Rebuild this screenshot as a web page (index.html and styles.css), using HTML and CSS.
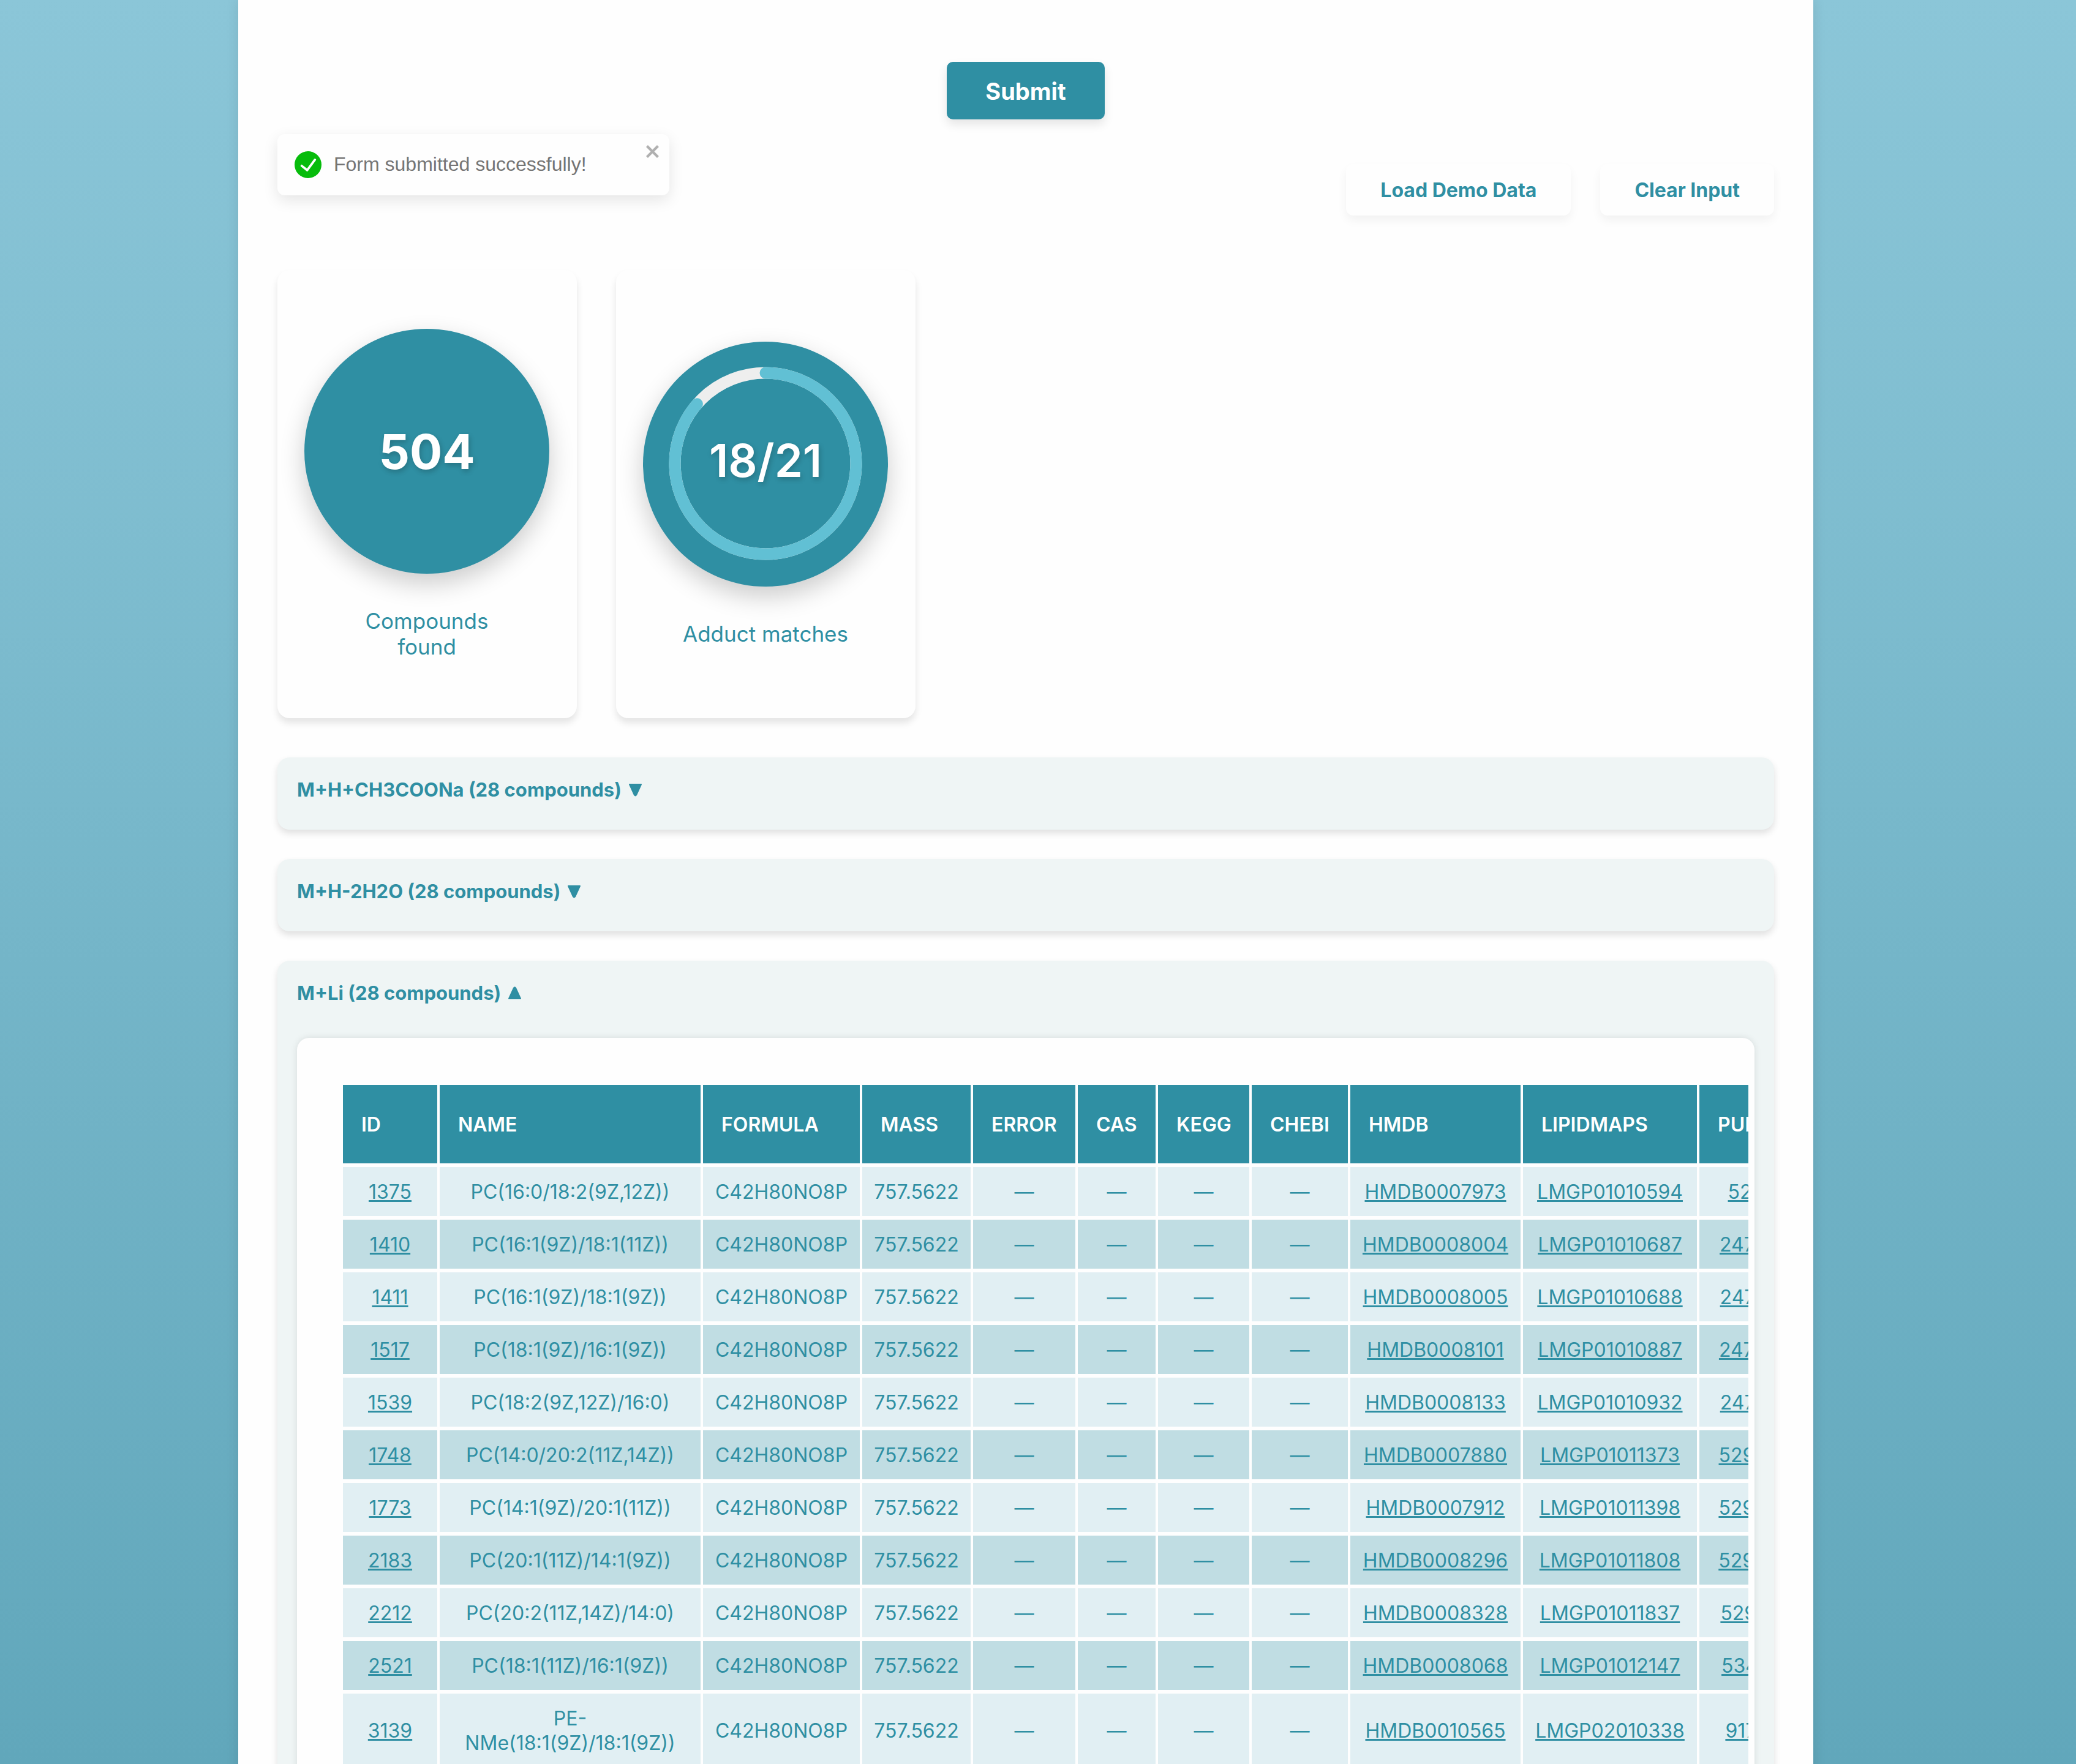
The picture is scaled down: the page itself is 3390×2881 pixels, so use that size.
FILE: index.html
```html
<!DOCTYPE html>
<html lang="en">
<head>
<meta charset="utf-8">
<title>Compound search results</title>
<link rel="stylesheet" href="styles.css">
</head>
<body>
<main class="page">
  <button class="submit" type="submit">Submit</button>

  <div class="toolbar">
    <div class="toast" role="alert">
      <svg class="toast-icon" viewBox="0 0 24 24" aria-hidden="true"><path d="M12 0a12 12 0 1012 12A12.014 12.014 0 0012 0zm6.927 8.2l-6.845 9.289a1.011 1.011 0 01-1.43.188l-4.888-3.908a1 1 0 111.25-1.562l4.076 3.261 6.227-8.451a1 1 0 111.61 1.183z"/></svg>
      <span class="toast-text">Form submitted successfully!</span>
      <button class="toast-close" type="button" aria-label="close"><svg viewBox="0 0 14 16" aria-hidden="true"><path d="M7.71 8.23l3.75 3.75-1.48 1.48-3.75-3.75-3.75 3.75L1 11.98l3.75-3.75L1 4.48 2.48 3l3.75 3.75L9.98 3l1.48 1.48-3.75 3.75z"/></svg></button>
    </div>
    <div class="actions">
      <button class="action" type="button">Load Demo Data</button>
      <button class="action" type="button">Clear Input</button>
    </div>
  </div>

  <section class="stats">
    <div class="stat">
      <div class="disc"><span class="count">504</span></div>
      <p class="stat-label">Compounds found</p>
    </div>
    <div class="stat">
      <div class="disc">
        <svg class="ring" viewBox="0 0 316 316">
          <circle class="ring-track" cx="158" cy="157" r="148"/>
          <circle class="ring-value" cx="158" cy="157" r="148" pathLength="100" stroke-dasharray="86.4 100" transform="rotate(-90 158 157)"/>
          <text class="ring-text" x="158" y="179">18/21</text>
        </svg>
      </div>
      <p class="stat-label">Adduct matches</p>
    </div>
  </section>

  <section class="groups">
    <div class="group"><button class="group-title" type="button" aria-expanded="false">M+H+CH3COONa (28 compounds)<svg class="caret" viewBox="0 0 21 21" aria-hidden="true"><path d="M1 1h19L12 18.500q-1.500 2-3 0z"/></svg></button></div>
    <div class="group"><button class="group-title" type="button" aria-expanded="false">M+H-2H2O (28 compounds)<svg class="caret" viewBox="0 0 21 21" aria-hidden="true"><path d="M1 1h19L12 18.500q-1.500 2-3 0z"/></svg></button></div>
    <div class="group">
      <button class="group-title" type="button" aria-expanded="true">M+Li (28 compounds)<svg class="caret" viewBox="0 0 21 21" aria-hidden="true"><path d="M1 19h19L12 1.500q-1.500-2-3 0z"/></svg></button>
      <div class="panel">
        <div class="scroller">
          <table class="compounds">
            <colgroup><col class="c-id"><col class="c-name"><col class="c-formula"><col class="c-mass"><col class="c-error"><col class="c-cas"><col class="c-kegg"><col class="c-chebi"><col class="c-hmdb"><col class="c-lipid"><col class="c-pub"></colgroup>
            <thead>
              <tr><th>ID</th><th>NAME</th><th>FORMULA</th><th>MASS</th><th>ERROR</th><th>CAS</th><th>KEGG</th><th>CHEBI</th><th>HMDB</th><th>LIPIDMAPS</th><th>PUBCHEM</th></tr>
            </thead>
            <tbody>
              <tr><td><a href="#1375">1375</a></td><td>PC(16:0/18:2(9Z,12Z))</td><td>C42H80NO8P</td><td>757.5622</td><td>—</td><td>—</td><td>—</td><td>—</td><td><a href="#h1">HMDB0007973</a></td><td><a href="#l1">LMGP01010594</a></td><td><a href="#p1">5287971</a></td></tr>
              <tr><td><a href="#1410">1410</a></td><td>PC(16:1(9Z)/18:1(11Z))</td><td>C42H80NO8P</td><td>757.5622</td><td>—</td><td>—</td><td>—</td><td>—</td><td><a href="#h2">HMDB0008004</a></td><td><a href="#l2">LMGP01010687</a></td><td><a href="#p2">24778764</a></td></tr>
              <tr><td><a href="#1411">1411</a></td><td>PC(16:1(9Z)/18:1(9Z))</td><td>C42H80NO8P</td><td>757.5622</td><td>—</td><td>—</td><td>—</td><td>—</td><td><a href="#h3">HMDB0008005</a></td><td><a href="#l3">LMGP01010688</a></td><td><a href="#p3">24778765</a></td></tr>
              <tr><td><a href="#1517">1517</a></td><td>PC(18:1(9Z)/16:1(9Z))</td><td>C42H80NO8P</td><td>757.5622</td><td>—</td><td>—</td><td>—</td><td>—</td><td><a href="#h4">HMDB0008101</a></td><td><a href="#l4">LMGP01010887</a></td><td><a href="#p4">24778934</a></td></tr>
              <tr><td><a href="#1539">1539</a></td><td>PC(18:2(9Z,12Z)/16:0)</td><td>C42H80NO8P</td><td>757.5622</td><td>—</td><td>—</td><td>—</td><td>—</td><td><a href="#h5">HMDB0008133</a></td><td><a href="#l5">LMGP01010932</a></td><td><a href="#p5">24778976</a></td></tr>
              <tr><td><a href="#1748">1748</a></td><td>PC(14:0/20:2(11Z,14Z))</td><td>C42H80NO8P</td><td>757.5622</td><td>—</td><td>—</td><td>—</td><td>—</td><td><a href="#h6">HMDB0007880</a></td><td><a href="#l6">LMGP01011373</a></td><td><a href="#p6">52922289</a></td></tr>
              <tr><td><a href="#1773">1773</a></td><td>PC(14:1(9Z)/20:1(11Z))</td><td>C42H80NO8P</td><td>757.5622</td><td>—</td><td>—</td><td>—</td><td>—</td><td><a href="#h7">HMDB0007912</a></td><td><a href="#l7">LMGP01011398</a></td><td><a href="#p7">52922339</a></td></tr>
              <tr><td><a href="#2183">2183</a></td><td>PC(20:1(11Z)/14:1(9Z))</td><td>C42H80NO8P</td><td>757.5622</td><td>—</td><td>—</td><td>—</td><td>—</td><td><a href="#h8">HMDB0008296</a></td><td><a href="#l8">LMGP01011808</a></td><td><a href="#p8">52923058</a></td></tr>
              <tr><td><a href="#2212">2212</a></td><td>PC(20:2(11Z,14Z)/14:0)</td><td>C42H80NO8P</td><td>757.5622</td><td>—</td><td>—</td><td>—</td><td>—</td><td><a href="#h9">HMDB0008328</a></td><td><a href="#l9">LMGP01011837</a></td><td><a href="#p9">52923145</a></td></tr>
              <tr><td><a href="#2521">2521</a></td><td>PC(18:1(11Z)/16:1(9Z))</td><td>C42H80NO8P</td><td>757.5622</td><td>—</td><td>—</td><td>—</td><td>—</td><td><a href="#h10">HMDB0008068</a></td><td><a href="#l10">LMGP01012147</a></td><td><a href="#p10">53478715</a></td></tr>
              <tr><td><a href="#3139">3139</a></td><td>PE-NMe(18:1(9Z)/18:1(9Z))</td><td>C42H80NO8P</td><td>757.5622</td><td>—</td><td>—</td><td>—</td><td>—</td><td><a href="#h11">HMDB0010565</a></td><td><a href="#l11">LMGP02010338</a></td><td><a href="#p11">91746121</a></td></tr>
            </tbody>
          </table>
        </div>
      </div>
    </div>
  </section>
</main>
</body>
</html>
```
FILE: styles.css
```css
* {
  box-sizing: border-box;
}

body {
  margin: 0;
  height: 100vh;
  overflow: hidden;
  padding: 0 429px 0 389px;
  background: linear-gradient(180deg, #8bc6d8, #61a7bb);
  color: #2f8fa3;
  font-family: Inter, "Liberation Sans", sans-serif;
  font-size: 32px;
  line-height: 40px;
}

button {
  border: 0;
  padding: 0;
  font: inherit;
  color: inherit;
  background: none;
  cursor: pointer;
}

.page {
  display: flex;
  flex-direction: column;
  min-height: 100%;
  padding: 101px 64px 64px;
  background: #fefefe;
  box-shadow: 0 0 20px rgba(0, 0, 0, 0.1);
}

.submit {
  align-self: center;
  padding: 26px 63px 24px;
  border-radius: 10px;
  background: #2f8fa3;
  color: #fff;
  font-size: 38px;
  font-weight: 700;
  line-height: 44px;
  box-shadow: 0 8px 16px rgba(0, 0, 0, 0.1);
}

.toolbar {
  display: flex;
  justify-content: space-between;
  align-items: flex-start;
  margin-top: 24px;
}

.toast {
  display: flex;
  align-items: flex-start;
  width: 640px;
  height: 100px;
  padding: 12px 12px 12px 28px;
  border-radius: 12px;
  background: #fefefe;
  color: #757575;
  font-family: "Liberation Sans", Arial, sans-serif;
  box-shadow: 0 8px 24px rgba(0, 0, 0, 0.1);
}

.toast-icon {
  width: 44px;
  height: 44px;
  margin: 16px 20px 0 0;
  fill: #07bc0c;
}

.toast-text {
  flex: 1;
  padding-top: 17px;
}

.toast-close svg {
  display: block;
  width: 28px;
  height: 32px;
  fill: #000;
  opacity: 0.3;
}

.actions {
  display: flex;
  gap: 48px;
  margin-top: 49px;
}

.action {
  padding: 23px 56px 21px;
  border-radius: 12px;
  background: #fefefe;
  font-weight: 700;
  box-shadow: 0 8px 16px rgba(0, 0, 0, 0.05);
}

.stats {
  display: flex;
  gap: 64px;
  margin-top: 89px;
}

.stat {
  display: flex;
  flex-direction: column;
  align-items: center;
  justify-content: center;
  width: 489px;
  padding: 96px 45px 96px 44px;
  border-radius: 20px;
  background: #fefefe;
  box-shadow: 0 8px 12px rgba(0, 0, 0, 0.1);
}

.disc {
  display: flex;
  align-items: center;
  justify-content: center;
  width: 400px;
  height: 400px;
  border-radius: 50%;
  background: #2f8fa3;
  box-shadow: 0 16px 40px rgba(0, 0, 0, 0.2);
}

.count {
  color: #fff;
  font-size: 79px;
  font-weight: 700;
  line-height: 96px;
  text-shadow: 2px 4px 8px rgba(0, 0, 0, 0.2);
}

.ring {
  width: 316px;
  height: 316px;
  overflow: visible;
}

.ring circle {
  fill: none;
  stroke-width: 19px;
}

.ring .ring-track {
  stroke: #eee;
}

.ring .ring-value {
  stroke: #61c0d4;
  stroke-linecap: round;
}

.ring-text {
  fill: #fff;
  font-size: 74px;
  font-weight: 600;
  text-anchor: middle;
  text-shadow: 2px 4px 8px rgba(0, 0, 0, 0.2);
}

.stat-label {
  max-width: 280px;
  margin: 56px 0 0;
  font-size: 35px;
  line-height: 42px;
  text-align: center;
}

.groups {
  display: flex;
  flex-direction: column;
  gap: 48px;
  margin-top: 64px;
}

.group {
  min-height: 118px;
  padding: 33px 32px 32px;
  border-radius: 20px;
  background: #eff5f5;
  box-shadow: 0 6px 12px rgba(0, 0, 0, 0.12);
}

.group-title {
  display: flex;
  align-items: center;
  gap: 12px;
  font-size: 31px;
  font-weight: 700;
}

.caret {
  width: 21px;
  height: 21px;
  overflow: visible;
  fill: currentColor;
  stroke: currentColor;
  stroke-width: 2px;
  stroke-linejoin: round;
}

.panel {
  margin-top: 53px;
  padding: 77px 10px 77px 75px;
  border-radius: 20px;
  background: #fefefe;
  box-shadow: 0 0 12px rgba(0, 0, 0, 0.1);
}

.scroller {
  overflow-x: auto;
}

.compounds {
  width: 2439px;
  table-layout: fixed;
  border-collapse: separate;
  border-spacing: 0;
}

.compounds th,
.compounds td {
  border: solid #fefefe;
  border-width: 0 4px 6px 0;
}

.compounds th {
  padding: 45px 0 43px 30px;
  background: #2f8fa3;
  color: #fff;
  font-weight: 600;
  text-align: left;
}

.compounds td {
  padding: 21px 20px 19px;
  background: #e1eff3;
  text-align: center;
  overflow-wrap: break-word;
}

.compounds td:nth-child(n+3) {
  padding: 21px 0 19px;
}

.compounds tbody tr:nth-child(even) td {
  background: #c0dde3;
}

.compounds a {
  color: inherit;
}

.c-id { width: 158px; }
.c-name { width: 430px; }
.c-formula { width: 260px; }
.c-mass { width: 181px; }
.c-error { width: 171px; }
.c-cas { width: 131px; }
.c-kegg { width: 153px; }
.c-chebi { width: 161px; }
.c-hmdb { width: 282px; }
.c-lipid { width: 288px; }
.c-pub { width: 224px; }
```
